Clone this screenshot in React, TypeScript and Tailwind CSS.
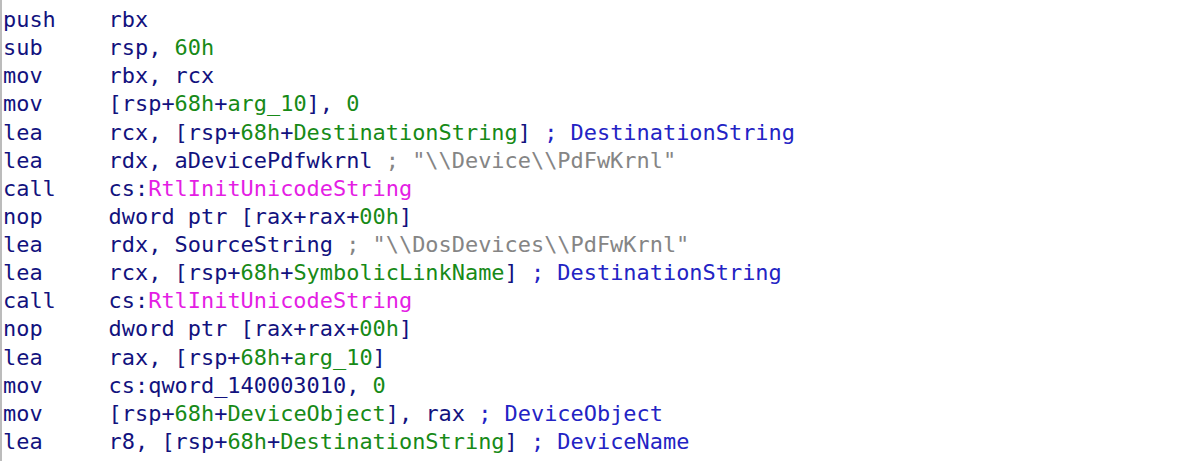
import React from "react";

type Seg = [string, string];

const N = "text-[#12127e]";
const G = "text-[#178a17]";
const C = "text-[#2323c4]";
const M = "text-[#e41ee4]";
const S = "text-[#858585]";

const lines: Seg[][] = [
  [["push    rbx", N]],
  [["sub     rsp, ", N], ["60h", G]],
  [["mov     rbx, rcx", N]],
  [["mov     [rsp+", N], ["68h", G], ["+", N], ["arg_10", G], ["], ", N], ["0", G]],
  [["lea     rcx, [rsp+", N], ["68h", G], ["+", N], ["DestinationString", G], ["] ", N], ["; DestinationString", C]],
  [["lea     rdx, aDevicePdfwkrnl ", N], ['; "\\\\Device\\\\PdFwKrnl"', S]],
  [["call    cs:", N], ["RtlInitUnicodeString", M]],
  [["nop     dword ptr [rax+rax+", N], ["00h", G], ["]", N]],
  [["lea     rdx, SourceString ", N], ['; "\\\\DosDevices\\\\PdFwKrnl"', S]],
  [["lea     rcx, [rsp+", N], ["68h", G], ["+", N], ["SymbolicLinkName", G], ["] ", N], ["; DestinationString", C]],
  [["call    cs:", N], ["RtlInitUnicodeString", M]],
  [["nop     dword ptr [rax+rax+", N], ["00h", G], ["]", N]],
  [["lea     rax, [rsp+", N], ["68h", G], ["+", N], ["arg_10", G], ["]", N]],
  [["mov     cs:qword_140003010, ", N], ["0", G]],
  [["mov     [rsp+", N], ["68h", G], ["+", N], ["DeviceObject", G], ["], rax ", N], ["; DeviceObject", C]],
  [["lea     r8, [rsp+", N], ["68h", G], ["+", N], ["DestinationString", G], ["] ", N], ["; DeviceName", C]],
  [["mov     [rsp+", N], ["68h", G], ["+", N], ["Exclusive", G], ["], ", N], ["0", G], [" ", N], ["; Exclusive", C]],
];

export default function App() {
  return (
    <div className="h-[461px] w-[1196px] overflow-hidden bg-white">
      <div
        className="h-full border-l-2 border-[#bcbcbc] pl-[1px] pt-[6px] text-[21.93px] leading-[28.13px] whitespace-pre"
        style={{ fontFamily: '"DejaVu Sans Mono", "Liberation Mono", monospace' }}
      >
        {lines.map((line, i) => (
          <div key={i}>
            {line.map(([t, c], j) => (
              <span key={j} className={c}>
                {t}
              </span>
            ))}
          </div>
        ))}
      </div>
    </div>
  );
}
